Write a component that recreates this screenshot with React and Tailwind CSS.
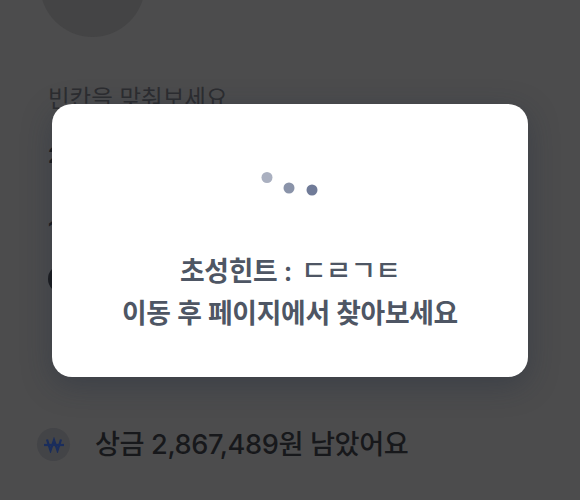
export default function App() {
  return (
    <div className="relative h-[500px] w-[580px] overflow-hidden bg-[#4c4c4d] font-['Inter','Noto_Sans_CJK_KR',sans-serif]">
      {/* page behind the dim */}
      <div className="flex h-full flex-col px-[48px]">
        <div className="ml-[-8px] mt-[-68px] h-[105px] w-[105px] shrink-0 rounded-full bg-[#444445]" />
        <div className="mt-[47px] text-[23.5px] leading-[30px] text-[#2c2d30]">빈칸을 맞춰보세요</div>
        <div className="mt-[27px] text-[22px] font-bold leading-[28px] text-[#1a1b1d]">2</div>
        <div className="mt-[46px] text-[22px] font-bold leading-[28px] text-[#1a1b1d]">1</div>
        <div className="mt-[22px] h-[28px] w-[28px] shrink-0 rounded-full border-[4px] border-[#1a1b1d]" />
        <div className="ml-[-11px] mt-[134px] flex items-center gap-[25px]">
          <div className="flex h-[33px] w-[33px] shrink-0 items-center justify-center rounded-full bg-[#434447]">
            <svg width="24" height="16" viewBox="0 0 24 16" fill="none" stroke="#1a2d5c" strokeWidth="2.2">
              <path d="M5 2.5 8.5 13.5 12 3 15.5 13.5 19 2.5" />
              <path d="M2 8h20" />
            </svg>
          </div>
          <div className="mt-[1px] whitespace-nowrap text-[27.2px] font-medium leading-[34px] tracking-[-0.4px] text-[#17181b]">상금 2,867,489원 남았어요</div>
        </div>
      </div>

      {/* modal */}
      <div className="absolute left-[52px] top-[104px] flex h-[273px] w-[476px] flex-col items-center rounded-[20px] bg-white shadow-[0_8px_30px_rgba(30,40,60,0.35)]">
        <svg className="mt-[66px] ml-[-2px]" width="60" height="30" viewBox="0 0 60 30">
          <circle cx="8" cy="7.5" r="5.5" fill="#aab0c0" />
          <circle cx="30" cy="18" r="5.5" fill="#8a93a9" />
          <circle cx="53" cy="20" r="5.5" fill="#707b98" />
        </svg>
        <div className="mt-[50px] flex h-[42px] items-center text-[26.8px] font-semibold leading-[42px] tracking-[-0.3px] text-[#4e5664]">
          초성힌트 :<span className="ml-[9px] text-[28px] font-medium leading-none tracking-[-1px]">ㄷㄹㄱㅌ</span>
        </div>
        <div className="text-[26.8px] font-semibold leading-[42px] tracking-[-0.3px] text-[#4e5664]">이동 후 페이지에서 찾아보세요</div>
      </div>
    </div>
  );
}
